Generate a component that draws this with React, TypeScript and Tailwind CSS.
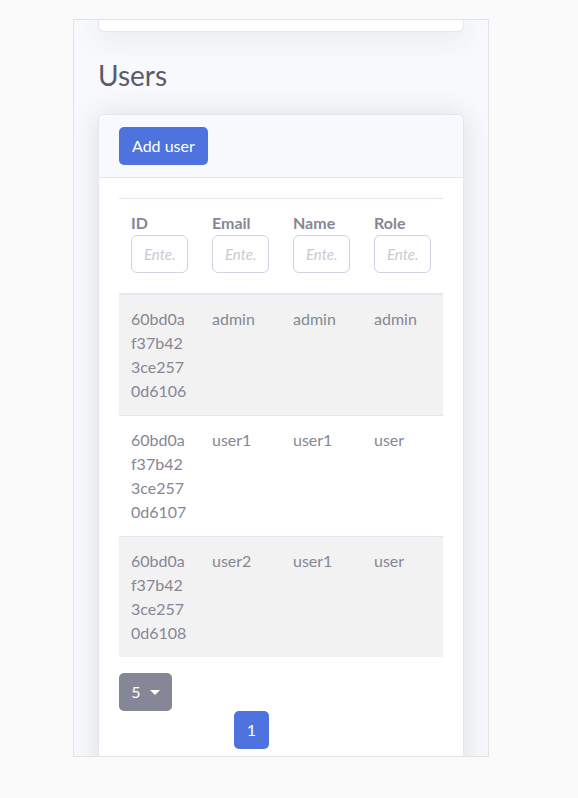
import React from "react";

type User = { id: string; email: string; name: string; role: string };

const users: User[] = [
  { id: "60bd0af37b423ce2570d6106", email: "admin", name: "admin", role: "admin" },
  { id: "60bd0af37b423ce2570d6107", email: "user1", name: "user1", role: "user" },
  { id: "60bd0af37b423ce2570d6108", email: "user2", name: "user1", role: "user" },
];

const columns = ["ID", "Email", "Name", "Role"];

// split the long object id into 6-char chunks, like the narrow column wraps it
const chunks = (s: string) => s.match(/.{1,6}/g) ?? [s];

export default function App() {
  return (
    <div
      className="min-h-[798px] bg-[#fafafa] pt-[19px] text-[#858796]"
      style={{ fontFamily: "Lato, 'Noto Sans', sans-serif" }}
    >
      <div className="ml-[73px] h-[738px] w-[416px] overflow-hidden border border-[#e3e3e6] bg-[#f8f9fc] px-6">
        {/* previous card, scrolled mostly out of view */}
        <div className="h-[12px] rounded-b-[6px] border border-t-0 border-[#e3e6f0] bg-white shadow-[0_2px_28px_0_rgba(58,59,69,0.15)]" />

        <h1 className="mt-[26px] mb-[22px] text-[28px] leading-[34px] font-normal text-[#5a5c69]">
          Users
        </h1>

        <div className="rounded-[6px] border border-[#e3e6f0] bg-white shadow-[0_2px_28px_0_rgba(58,59,69,0.15)]">
          {/* CARD HEADER */}
          <div className="rounded-t-[6px] border-b border-[#e3e6f0] bg-[#f8f9fc] px-5 py-3">
            <button className="h-[38px] rounded-[5px] bg-[#4e73df] px-[13px] text-[16px] text-white">
              Add user
            </button>
          </div>

          {/* CARD BODY */}
          <div className="p-5">
            <table className="w-[324px] table-fixed border-collapse text-[16px] leading-6">
              <thead>
                <tr className="border-t border-b-2 border-[#e3e6f0]">
                  {columns.map((c) => (
                    <th key={c} className="w-[81px] px-3 pt-3 pb-5 text-left align-top font-bold">
                      <div>{c}</div>
                      <input
                        placeholder="Ente."
                        className="h-[38px] w-[57px] rounded-[6px] border border-[#d1d3e2] bg-white px-3 text-[15px] font-normal italic outline-none placeholder:text-[#c9cad3]"
                      />
                    </th>
                  ))}
                </tr>
              </thead>
              <tbody>
                {users.map((u, i) => (
                  <tr
                    key={u.id}
                    className={`border-t border-[#e3e6f0] ${i % 2 === 0 ? "bg-[#f2f2f2]" : "bg-white"}`}
                  >
                    <td className="p-3 align-top">
                      {chunks(u.id).map((part) => (
                        <div key={part}>{part}</div>
                      ))}
                    </td>
                    <td className="p-3 align-top">{u.email}</td>
                    <td className="p-3 align-top">{u.name}</td>
                    <td className="p-3 align-top">{u.role}</td>
                  </tr>
                ))}
              </tbody>
            </table>

            {/* PAGINATION */}
            <div className="mt-4">
              <button className="flex h-[38px] w-[53px] items-center justify-center gap-[9px] rounded-[5px] bg-[#858796] text-[16px] text-white">
                5
                <span className="mt-[1px] h-0 w-0 border-x-[5px] border-t-[5px] border-x-transparent border-t-white" />
              </button>
              <div className="ml-[115px]">
                <button className="h-[38px] w-[35px] rounded-[5px] bg-[#4e73df] text-[16px] text-white">
                  1
                </button>
              </div>
            </div>
          </div>
        </div>
      </div>
    </div>
  );
}
